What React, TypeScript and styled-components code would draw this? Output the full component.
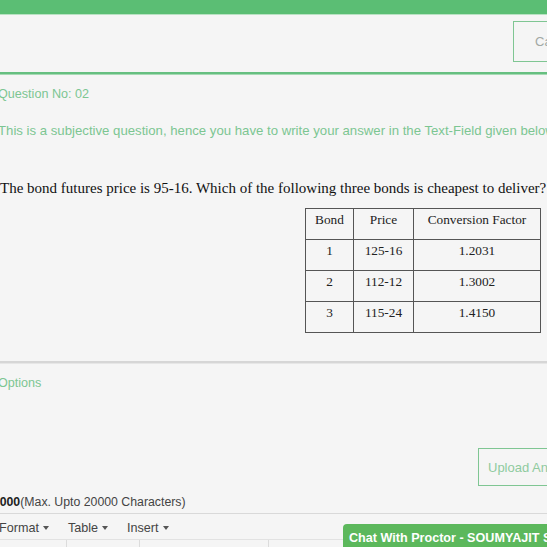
import styled, { createGlobalStyle } from 'styled-components'

const GlobalS = createGlobalStyle`
    html, body {
        margin: 0;
        padding: 0;
        background-color: #f5f5f5;
        overflow: hidden;
    }
    body {
        font-family: "Liberation Sans", Arial, sans-serif;
    }
`

const PageS = styled.div`
    width: 547px;
    height: 547px;
    overflow: hidden;
    position: relative;
    background-color: #f5f5f5;
`

const TopBarS = styled.div`
    height: 14px;
    background-color: #5bbe74;
    border-bottom: 1px solid #b9e2c3;
`

const HeaderS = styled.div`
    height: 57px;
    display: flex;
    align-items: flex-start;
    padding-left: 513px;
    padding-top: 6px;
    box-sizing: border-box;
`

const OutlineBtnS = styled.button<{ tone: 'gray' | 'green', h: number, pl: number }>`
    flex-shrink: 0;
    height: ${ ({ h }) => h }px;
    padding: 0 9px 0 ${ ({ pl }) => pl }px;
    background-color: transparent;
    border: 1px solid #7fc693;
    border-right: none;
    font-family: "Liberation Sans", Arial, sans-serif;
    font-size: 13px;
    white-space: nowrap;
    text-align: left;
    color: ${ ({ tone }) => tone === 'gray' ? '#a2a8a4' : '#8fcb9f' };
`

const GreenRuleS = styled.div`
    height: 2px;
    background-color: #66bf80;
    border-bottom: 1px solid #a6dab4;
`

const ContentS = styled.div`
    margin-left: -2px;
`

const InfoTxtS = styled.p<{ mt: number, fs: number }>`
    margin: ${ ({ mt }) => mt }px 0 0 0;
    font-size: ${ ({ fs }) => fs }px;
    line-height: 16px;
    color: #7cc692;
    white-space: nowrap;
`

const QuestionS = styled.p`
    margin: 40px 0 0 2px;
    font-family: "Liberation Serif", "Times New Roman", serif;
    font-size: 15px;
    line-height: 18px;
    color: #111;
    white-space: nowrap;
`

const TableWrapS = styled.div`
    display: flex;
    padding-left: 307px;
    margin-top: 11px;
`

const TableS = styled.table`
    border-collapse: collapse;
    font-family: "Liberation Serif", "Times New Roman", serif;
    font-size: 13.3px;
    color: #222;
    border: 1px solid #333;
`

const CellS = styled.td<{ w: number }>`
    width: ${ ({ w }) => w }px;
    height: 31px;
    box-sizing: border-box;
    border: 1px solid #555;
    text-align: center;
    vertical-align: top;
    padding: 3px 0 0 0;
    line-height: 15px;
`

const SectionRuleS = styled.div`
    margin-top: 28px;
    height: 2px;
    background-color: #d6d6d6;
    border-bottom: 1px solid #e6e6e6;
`

const UploadRowS = styled.div`
    display: flex;
    padding-left: 480px;
    margin-top: 57px;
`

const CountTxtS = styled.p`
    margin: 8px -10px 0 -12px;
    font-size: 12.3px;
    line-height: 16px;
    color: #444;
    white-space: nowrap;
    padding-bottom: 3px;
    border-bottom: 1px solid #d9d9d9;
`

const BoldS = styled.b`
    color: #222;
`

const MenuBarS = styled.div`
    display: flex;
    gap: 19px;
    padding: 5px 0 0 1px;
    height: 22px;
    box-sizing: border-box;
`

const MenuItemS = styled.span`
    display: flex;
    align-items: center;
    gap: 4px;
    font-size: 12.6px;
    line-height: 16px;
    color: #444;
`

const CaretS = styled.span`
    width: 0;
    height: 0;
    border-left: 3.5px solid transparent;
    border-right: 3.5px solid transparent;
    border-top: 4px solid #555;
`

const ToolRowS = styled.div`
    display: flex;
    margin-top: 3px;
    border-top: 1px solid #e2e2e2;
    height: 12px;
`

const ToolGroupS = styled.div<{ w: number }>`
    width: ${ ({ w }) => w }px;
    flex-shrink: 0;
    border-right: 1px solid #dcdcdc;
`

const ChatBtnS = styled.div`
    position: absolute;
    left: 343px;
    top: 524px;
    width: 230px;
    height: 30px;
    background-color: #5cb85c;
    border-radius: 4px 0 0 0;
    color: #fff;
    font-size: 12.6px;
    font-weight: 600;
    padding: 7px 0 0 6px;
    box-sizing: border-box;
    white-space: nowrap;
`

const rows = [
    [ '1', '125-16', '1.2031' ],
    [ '2', '112-12', '1.3002' ],
    [ '3', '115-24', '1.4150' ]
]

const App = () => {
    return (
        <>
            <GlobalS />
            <PageS>
                <TopBarS />
                <HeaderS>
                    <OutlineBtnS tone="gray" h={ 41 } pl={ 21 }>Cancel</OutlineBtnS>
                </HeaderS>
                <GreenRuleS />
                <ContentS>
                    <InfoTxtS mt={ 11 } fs={ 12.6 }>Question No: 02</InfoTxtS>
                    <InfoTxtS mt={ 21 } fs={ 13.2 }>This is a subjective question, hence you have to write your answer in the Text-Field given below.</InfoTxtS>
                    <QuestionS>The bond futures price is 95-16. Which of the following three bonds is cheapest to deliver?</QuestionS>
                    <TableWrapS>
                        <TableS>
                            <tbody>
                                <tr>
                                    <CellS w={ 48 }>Bond</CellS>
                                    <CellS w={ 60 }>Price</CellS>
                                    <CellS w={ 127 }>Conversion Factor</CellS>
                                </tr>
                                {rows.map(r =>
                                    <tr key={ r[0] }>
                                        <CellS w={ 48 }>{ r[0] }</CellS>
                                        <CellS w={ 60 }>{ r[1] }</CellS>
                                        <CellS w={ 127 }>{ r[2] }</CellS>
                                    </tr>
                                )}
                            </tbody>
                        </TableS>
                    </TableWrapS>
                    <SectionRuleS />
                    <InfoTxtS mt={ 11 } fs={ 12.6 }>Options</InfoTxtS>
                    <UploadRowS>
                        <OutlineBtnS tone="green" h={ 38 } pl={ 9 }>Upload Answer</OutlineBtnS>
                    </UploadRowS>
                    <CountTxtS><BoldS>20000</BoldS>(Max. Upto 20000 Characters)</CountTxtS>
                    <MenuBarS>
                        <MenuItemS>Format<CaretS /></MenuItemS>
                        <MenuItemS>Table<CaretS /></MenuItemS>
                        <MenuItemS>Insert<CaretS /></MenuItemS>
                    </MenuBarS>
                    <ToolRowS>
                        <ToolGroupS w={ 68 } />
                        <ToolGroupS w={ 72 } />
                        <ToolGroupS w={ 128 } />
                    </ToolRowS>
                </ContentS>
                <ChatBtnS>Chat With Proctor - SOUMYAJIT SAHA</ChatBtnS>
            </PageS>
        </>
    )
}

export default App
